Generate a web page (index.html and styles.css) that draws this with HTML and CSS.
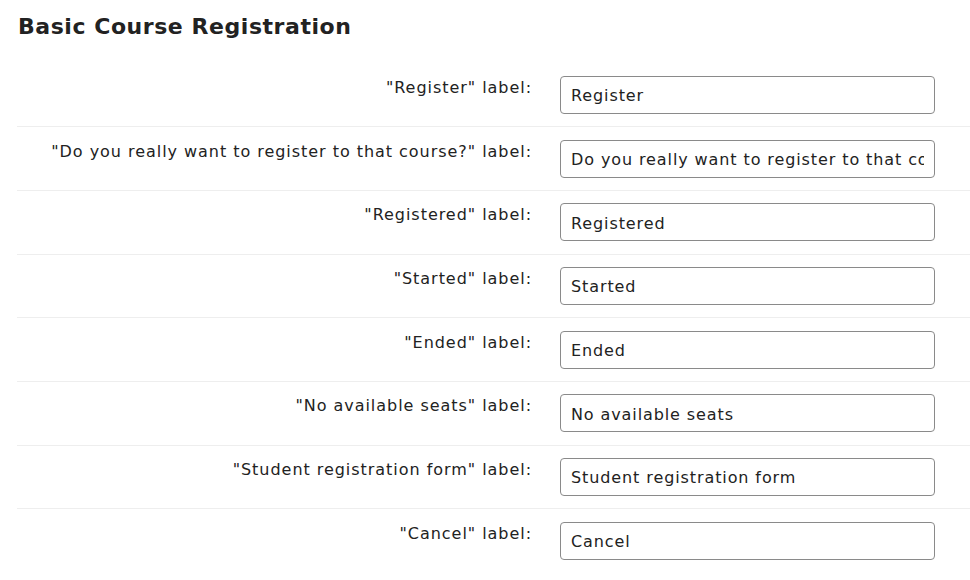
FILE: index.html
```html
<!DOCTYPE html>
<html>
<head>
<meta charset="utf-8">
<link rel="stylesheet" href="styles.css">
</head>
<body>
<div class="page">
  <h2 class="title">Basic Course Registration</h2>
  <form class="form">
    <div class="row"><label class="lbl">"Register" label:</label><input class="field" type="text" value="Register"></div>
    <div class="row"><label class="lbl">"Do you really want to register to that course?" label:</label><input class="field" type="text" value="Do you really want to register to that course?"></div>
    <div class="row"><label class="lbl">"Registered" label:</label><input class="field" type="text" value="Registered"></div>
    <div class="row"><label class="lbl">"Started" label:</label><input class="field" type="text" value="Started"></div>
    <div class="row"><label class="lbl">"Ended" label:</label><input class="field" type="text" value="Ended"></div>
    <div class="row"><label class="lbl">"No available seats" label:</label><input class="field" type="text" value="No available seats"></div>
    <div class="row"><label class="lbl">"Student registration form" label:</label><input class="field" type="text" value="Student registration form"></div>
    <div class="row"><label class="lbl">"Cancel" label:</label><input class="field" type="text" value="Cancel"></div>
  </form>
</div>
</body>
</html>
```
FILE: styles.css
```css
html, body {
  margin: 0;
  padding: 0;
  background: #fff;
}
body {
  font-family: "DejaVu Sans", Verdana, sans-serif;
  color: #222;
  font-size: 16px;
  letter-spacing: 0.96px;
  overflow: hidden;
}
.page {
  padding: 12px 0 0 17px;
  width: 1000px;
}
.title {
  margin: 0 0 0 1px;
  font-size: 22px;
  font-weight: bold;
  line-height: 30px;
  letter-spacing: 0.55px;
  color: #222;
}
.form {
  margin-top: 21.67px;
}
.row {
  display: flex;
  align-items: flex-start;
  gap: 28px;
  padding: 12.33px 0;
  border-bottom: 1px solid #eee;
}
.row:last-child {
  border-bottom: none;
}
.lbl {
  width: 515px;
  flex: none;
  text-align: right;
  line-height: 24px;
}
.field {
  box-sizing: border-box;
  width: 375px;
  height: 38px;
  margin: 0;
  padding: 2px 10px 0;
  border: 1px solid #8a8a8a;
  border-radius: 4px;
  font-family: "DejaVu Sans", Verdana, sans-serif;
  font-size: 16px;
  letter-spacing: 0.9px;
  color: #222;
  background: #fff;
  outline: none;
}
```
